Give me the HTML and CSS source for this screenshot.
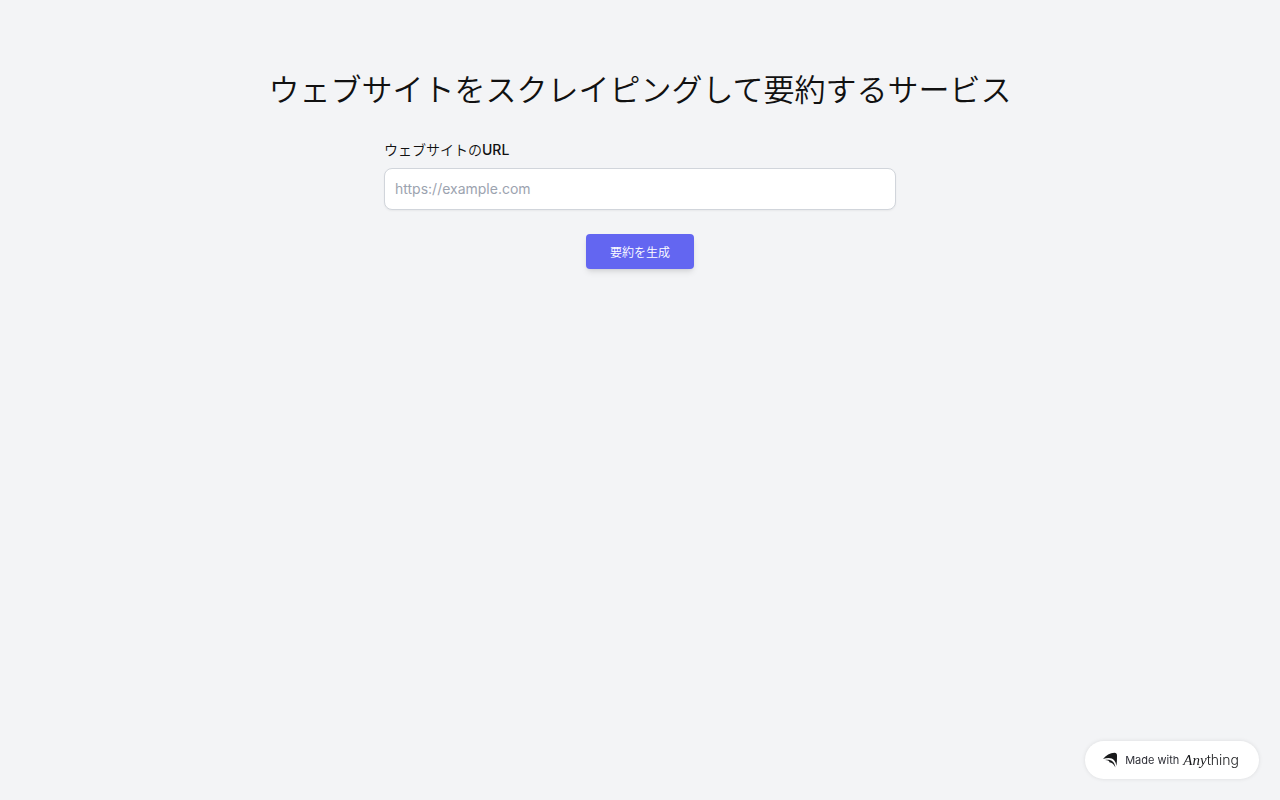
FILE: index.html
```html
<!DOCTYPE html>
<html lang="ja">
<head>
<meta charset="utf-8">
<meta name="viewport" content="width=device-width, initial-scale=1">
<title>ウェブサイトをスクレイピングして要約するサービス</title>
<link rel="stylesheet" href="styles.css">
</head>
<body>
<main class="page">
  <h1 class="title">ウェブサイトをスクレイピングして要約するサービス</h1>
  <form class="form">
    <label class="label" for="url">ウェブサイトの<span class="latin">URL</span></label>
    <input class="field" id="url" type="url" placeholder="https://example.com">
    <button class="submit" type="submit">要約を生成</button>
  </form>
</main>
<a class="badge" href="#">
  <svg class="mark" viewBox="0 0 14 16" aria-hidden="true">
    <path fill="#18191b" d="M0 7C3 3.500 7 1 11.500 .8C13.200 .8 14 1.600 14 3.500C14 8 13.900 11 13.400 14C12.800 7.500 8.500 4 0 7Z"/>
    <path fill="#18191b" d="M2 8C7.500 6.800 11.800 9.300 12.400 15.500C11 12.300 9 10.500 6.300 10.200C7 9 5 8.300 2 8Z"/>
  </svg>
  <span class="made">Made with</span>
  <span class="brand"><span class="any">Any</span><span class="thing">thing</span></span>
</a>
</body>
</html>
```
FILE: styles.css
```css
* {
  box-sizing: border-box;
}

body {
  margin: 0;
  min-height: 100vh;
  background: #f3f4f6;
  color: #111;
  font-family: Inter, "Noto Sans CJK JP", sans-serif;
}

.page {
  padding: 72px 16px;
}

.title {
  margin: 0 0 32px;
  font-size: 31px;
  line-height: 36px;
  font-weight: 350;
  text-align: center;
}

.form {
  display: flex;
  flex-direction: column;
  align-items: center;
  width: 100%;
  max-width: 512px;
  margin: 0 auto;
}

.label {
  align-self: flex-start;
  margin-bottom: 8px;
  font-size: 14px;
  line-height: 20px;
  font-weight: 350;
}

.latin {
  font-weight: 500;
}

.field {
  width: 100%;
  height: 42px;
  margin-bottom: 24px;
  padding: 0 10px 2px;
  border: 1px solid #d1d5db;
  border-radius: 8px;
  background: #fff;
  box-shadow: 0 1px 2px rgba(0, 0, 0, 0.05);
  color: #111;
  font: 14px/20px Inter, sans-serif;
}

.field::placeholder {
  color: #9ca3af;
}

.submit {
  padding: 11px 24px 9px;
  border: 0;
  border-radius: 4px;
  background: #6366f1;
  box-shadow: 0 4px 6px -1px rgba(0, 0, 0, 0.1), 0 2px 4px -2px rgba(0, 0, 0, 0.1);
  color: #fff;
  font: 350 12px/15px Inter, "Noto Sans CJK JP", sans-serif;
}

.badge {
  position: fixed;
  right: 21px;
  bottom: 21px;
  display: flex;
  align-items: center;
  height: 38px;
  padding: 0 20px 0 18px;
  border-radius: 19px;
  background: #fff;
  box-shadow: 0 0 4px rgba(0, 0, 0, 0.1);
  color: #18191b;
  text-decoration: none;
}

.mark {
  width: 14px;
  height: 16px;
  margin-right: 8px;
}

.made {
  margin-right: 4px;
  color: #2d2e36;
  font-size: 11px;
  line-height: 16px;
}

.brand {
  display: flex;
  align-items: baseline;
  line-height: 20px;
}

.any {
  font-family: "Liberation Serif", serif;
  font-size: 15px;
  font-style: italic;
}

.thing {
  font-size: 14px;
  font-weight: 300;
}
```
